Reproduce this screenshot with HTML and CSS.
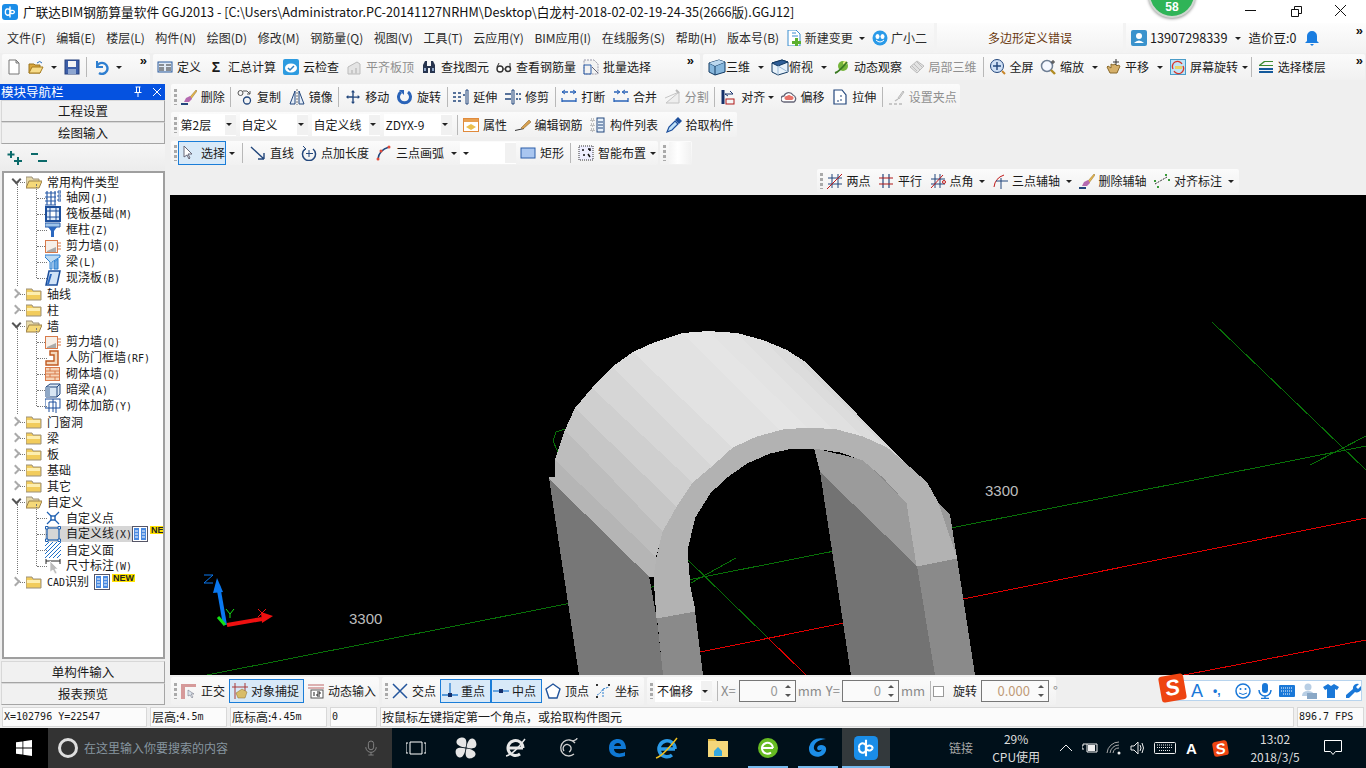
FILE: index.html
```html
<!DOCTYPE html>
<html lang="zh-CN">
<head>
<meta charset="utf-8">
<title>广联达BIM钢筋算量软件 GGJ2013</title>
<link rel="stylesheet" href="styles.css">
</head>
<body>
<svg class="defs" aria-hidden="true">
<defs>
<symbol id="new" viewBox="0 0 16 16"><path d="M3 1h7l3 3v11H3z" fill="#fff" stroke="#777"/><path d="M10 1v3h3z" fill="#ddd" stroke="#777"/></symbol>
<symbol id="open" viewBox="0 0 16 16"><path d="M1 5h5l1 1h5v8H1z" fill="#d9a63c" stroke="#9a7420"/><path d="M1 14l3-6h11l-3 6z" fill="#f7dc8a" stroke="#a67c20"/><path d="M9 4q3-3 5 0" stroke="#2a6ebb" fill="none"/></symbol>
<symbol id="save" viewBox="0 0 16 16"><rect x="1" y="1" width="14" height="14" fill="#3c5ea8" stroke="#26407c"/><rect x="4" y="2" width="8" height="6" fill="#f4f4f4"/><rect x="4" y="10" width="8" height="5" fill="#8ea6d0"/></symbol>
<symbol id="undo" viewBox="0 0 16 16"><path d="M4 2v6h6" fill="none" stroke="#2f7fd0" stroke-width="2"/><path d="M4 7a5.500 5.500 0 1 1 2 7" fill="none" stroke="#2f7fd0" stroke-width="2.400"/></symbol>
<symbol id="def" viewBox="0 0 16 16"><rect x="1" y="3" width="14" height="10" fill="#e0eaf6" stroke="#2b5a9b"/><path d="M2 6h5M2 9h5M2 11h5M9 6h5M9 9h5M9 11h5" stroke="#333"/></symbol>
<symbol id="cloud" viewBox="0 0 16 16"><rect width="16" height="16" rx="2" fill="#2d9be0"/><ellipse cx="8" cy="9" rx="6" ry="4.500" fill="#fff"/><path d="M5 9l2 2 4-4" fill="none" stroke="#2d7fc0" stroke-width="1.500"/></symbol>
<symbol id="pq" viewBox="0 0 16 16"><path d="M2 8l9-5 3 2v10H2z" fill="#e4e4e4" stroke="#bbb"/><path d="M5 11h2v4H5zM9 9h2v6H9z" fill="#c8c8c8"/></symbol>
<symbol id="find" viewBox="0 0 16 16"><path d="M2 6l2-4h2v5h4V2h2l2 4v8H9V9H7v5H2z" fill="#27344e"/><path d="M3 9h2v3H3zM11 9h2v3h-2z" fill="#8ea6c8"/></symbol>
<symbol id="see" viewBox="0 0 16 16"><circle cx="4" cy="10" r="3" fill="#fff" stroke="#333" stroke-width="1.400"/><path d="M7 10h3M14 4v6M1 8l2-4" stroke="#333" fill="none"/><circle cx="12" cy="10" r="2.500" fill="#fff" stroke="#333" stroke-width="1.400"/></symbol>
<symbol id="batch" viewBox="0 0 16 16"><path d="M1 1h10l4 4v10H1z" fill="#f2f2f2" stroke="#99a" stroke-dasharray="2 1"/><path d="M1 6h7v9H1z" fill="none" stroke="#2a5ca8"/><path d="M9 8l6 6" stroke="#667"/></symbol>
<symbol id="cube" viewBox="0 0 18 18"><path d="M1 5l10-3 6 2v10l-10 3-6-3z" fill="#86b6dc" stroke="#123a63"/><path d="M1 5l6 3 10-4M7 8v9" fill="none" stroke="#123a63"/><path d="M1 5l10-3 6 2-10 4z" fill="#bcd8ef"/></symbol>
<symbol id="top" viewBox="0 0 18 18"><path d="M1 5l10-3 6 2v10l-10 3-6-3z" fill="#e8f2fa" stroke="#123a63"/><path d="M1 5l10-3 6 2-10 4z" fill="#2f5f98" stroke="#123a63"/><path d="M7 8v9M7 8l10 6" stroke="#9bbad6" fill="none"/></symbol>
<symbol id="orbit" viewBox="0 0 16 16"><circle cx="9" cy="7" r="5" fill="#75b53a"/><circle cx="11" cy="4" r="2" fill="#eef08a"/><path d="M1 14Q5 13 13 3" stroke="#3a7a22" stroke-width="2" fill="none"/></symbol>
<symbol id="loc" viewBox="0 0 16 16"><path d="M1 8l7-6 7 5-7 7z" fill="#e2e2e2" stroke="#bdbdbd"/><path d="M5 5l6 6M8 3l5 5M3 7l5 5" stroke="#bdbdbd"/></symbol>
<symbol id="full" viewBox="0 0 16 16"><circle cx="7" cy="7" r="6.500" fill="#cfe0f5" stroke="#23477c"/><path d="M7 3v8M3 7h8" stroke="#23477c" stroke-width="1.400"/><path d="M12 12l3 3" stroke="#c8862a" stroke-width="2"/></symbol>
<symbol id="zm" viewBox="0 0 16 16"><circle cx="7" cy="7" r="5.500" fill="#f5f8ff" stroke="#6f7f95" stroke-width="1.500"/><path d="M11 11l4 4" stroke="#b08a20" stroke-width="2.400"/><path d="M13 1v4M11 3h4" stroke="#333"/></symbol>
<symbol id="pan" viewBox="0 0 16 16"><path d="M2 8l3 6h7l3-7-2-1-1 1-2-2-2 1-2-1v4L3 7z" fill="#d6b06a" stroke="#8a6a2c"/><path d="M11 0v6M8 3h6" stroke="#333"/></symbol>
<symbol id="rotsc" viewBox="0 0 16 16"><rect x=".5" y=".5" width="15" height="15" fill="#bfe4f7" stroke="#4a9cc8"/><path d="M3 10a5 5 0 0 1 9-5M13 7a5 5 0 0 1-9 5" fill="none" stroke="#d8362a" stroke-width="1.400"/><rect x="5" y="7" width="7" height="3" fill="#e7d56a"/></symbol>
<symbol id="floors" viewBox="0 0 16 16"><path d="M1 6l5-4h9v1H7L3 6h12v1H1z" fill="#3c8a30"/><path d="M1 10h14M1 13h14" stroke="#145a9c" stroke-width="2"/></symbol>
<symbol id="brush" viewBox="0 0 16 16"><path d="M9 8l6-7 1 1-6 8z" fill="#e9b84a" stroke="#8a6a2c" stroke-width=".500"/><path d="M5 9l4-2 2 3-3 3H3z" fill="#b56ab0"/><path d="M0 15h7" stroke="#23477c" stroke-width="2"/></symbol>
<symbol id="copy" viewBox="0 0 16 16"><circle cx="3.500" cy="4" r="2.500" fill="none" stroke="#555"/><circle cx="10" cy="11.500" r="3.500" fill="none" stroke="#23477c" stroke-width="1.300"/><path d="M6 2h4l3 3M13 2v3h-3" fill="none" stroke="#555"/></symbol>
<symbol id="mir" viewBox="0 0 16 16"><path d="M6 2v13H1zM10 2v13h5z" fill="#e6eef8" stroke="#23477c"/><path d="M8 0v16" stroke="#777" stroke-dasharray="2 1"/></symbol>
<symbol id="mv" viewBox="0 0 16 16"><path d="M8 1l2 2.500H8.700v4h4V6L15 8l-2.300 2V8.700h-4v4H10L8 15l-2-2.300h1.300v-4h-4V10L1 8l2.300-2v1.300h4v-4H6z" fill="#23477c"/></symbol>
<symbol id="rot" viewBox="0 0 16 16"><path d="M4 3a6 6 0 1 0 7 0" fill="none" stroke="#2a63b8" stroke-width="3"/><path d="M2 1h5v5z" fill="#2a63b8"/></symbol>
<symbol id="ext" viewBox="0 0 16 16"><path d="M13 1h2v14h-2z" fill="none" stroke="#23477c"/><path d="M0 4h3M5 4h3M0 8h3M5 8h3M10 6h2M0 12h3M5 12h3" stroke="#23477c" stroke-width="1.300"/></symbol>
<symbol id="trim" viewBox="0 0 16 16"><path d="M7 1h2v14H7z" fill="none" stroke="#23477c"/><path d="M0 5h6M0 10h6M11 5h2M11 10h2M14 5h2M14 10h2" stroke="#23477c" stroke-width="1.300"/></symbol>
<symbol id="brk" viewBox="0 0 16 16"><path d="M1 3h6M9 3h6M1 12h14M1 9v4M15 9v4" stroke="#2a63b8" fill="none" stroke-width="1.300"/><path d="M4 1L1 3l3 2M12 1l3 2-3 2" stroke="#2a63b8" fill="none"/></symbol>
<symbol id="mrg" viewBox="0 0 16 16"><path d="M1 12h14M1 9v4M15 9v4M1 3h5M10 3h5" stroke="#2a63b8" fill="none" stroke-width="1.300"/><path d="M4 1l3 2-3 2M12 1L9 3l3 2" stroke="#2a63b8" fill="none"/></symbol>
<symbol id="spl" viewBox="0 0 16 16"><path d="M1 14L14 3v11zM0 9l14-6" fill="#eee" stroke="#c4c4c4"/><path d="M11 1l3 3" stroke="#bbb" stroke-width="2"/></symbol>
<symbol id="alg" viewBox="0 0 16 16"><path d="M2 1v14" stroke="#16306a" stroke-width="3"/><path d="M4 5h8l-3-3M4 5l3 2" fill="none" stroke="#16306a"/><rect x="5" y="10" width="8" height="5" fill="none" stroke="#b01818"/></symbol>
<symbol id="off" viewBox="0 0 16 16"><path d="M3 13a3 3 0 0 1 0-6 5 5 0 0 1 9-1 4 4 0 0 1 1 7z" fill="#fff" stroke="#667" stroke-width="1.300"/><path d="M5 11a2 2 0 0 1 1-4 2.500 2.500 0 0 1 4 0 2 2 0 0 1 1 4z" fill="#e8736a"/></symbol>
<symbol id="str" viewBox="0 0 16 16"><path d="M2 1h8l4 5v9H2z" fill="#fff" stroke="#23477c" stroke-width="1.200"/><path d="M9 6v2M9 10v2M5 12h2" stroke="#23477c"/></symbol>
<symbol id="grp" viewBox="0 0 16 16"><path d="M9 9l5-7 1 1-5 7z" fill="#ddd" stroke="#bbb"/><path d="M0 15h3M5 15h3M10 15h3M6 12l3-2" stroke="#bbb" stroke-width="1.400"/></symbol>
<symbol id="attr" viewBox="0 0 16 16"><rect x=".5" y="1.500" width="15" height="13" fill="#fff" stroke="#e08a3c"/><path d="M1 2h14v3H1z" fill="#e8a050"/><path d="M3 10l5-3 5 3-5 3z" fill="#eac04e"/></symbol>
<symbol id="bar" viewBox="0 0 16 16"><path d="M0 13l9-2v1l-9 2z" fill="#333"/><path d="M6 11l8-8 2 2-8 7z" fill="#d8a050" stroke="#7a5a24" stroke-width=".500"/></symbol>
<symbol id="lst" viewBox="0 0 16 16"><path d="M1 2h3v2H1zM1 7h3v2H1zM1 12h3v2H1z" fill="none" stroke="#888" stroke-dasharray="1 1"/><rect x="7" y="1" width="7" height="14" fill="#e6f0fa" stroke="#23477c"/><path d="M8 5h5M8 8h5M8 11h5" stroke="#23477c"/></symbol>
<symbol id="pick" viewBox="0 0 16 16"><path d="M1 15l2-5 6-6 3 3-6 6z" fill="#bfe0f7" stroke="#1d4f9c" stroke-width="1.200"/><path d="M9 3l3-3 4 4-3 3z" fill="#1d4f9c"/></symbol>
<symbol id="cur" viewBox="0 0 16 16"><path d="M4 1v11l3-2 2 4 1-1-2-4h4z" fill="#fff" stroke="#667"/></symbol>
<symbol id="ln" viewBox="0 0 16 16"><path d="M1 2l13 12M14 14v-6M14 14H8" fill="none" stroke="#23477c" stroke-width="1.400"/></symbol>
<symbol id="ptl" viewBox="0 0 16 16"><path d="M4 4a6.500 6.500 0 1 0 8 0" fill="none" stroke="#23477c" stroke-width="1.500"/><path d="M2 1l3 3-3 2" fill="none" stroke="#23477c"/><path d="M8 5v7M5 8.500h7" stroke="#23477c"/></symbol>
<symbol id="arc" viewBox="0 0 16 16"><path d="M2 14Q3 5 13 2" fill="none" stroke="#23477c" stroke-width="1.500"/><circle cx="2" cy="14" r="1.500" fill="#e24b3a"/><circle cx="5" cy="6" r="1.500" fill="#e24b3a"/><circle cx="13" cy="2" r="1.500" fill="#e24b3a"/></symbol>
<symbol id="rc" viewBox="0 0 16 16"><rect x="1" y="3" width="14" height="10" fill="#a9c6f0" stroke="#2a5ca8"/></symbol>
<symbol id="sm" viewBox="0 0 16 16"><rect x="1" y="1" width="14" height="14" fill="#eef" stroke="#333" stroke-dasharray="1 1"/><path d="M4 5h2M10 4h2v2M5 10h2M10 9l2 3" stroke="#111" stroke-width="1.500"/></symbol>
<symbol id="two" viewBox="0 0 16 16"><path d="M5 1v14M11 1v14M1 5h14M1 11h14" stroke="#23477c"/><path d="M0 16L15 1" stroke="#c01818"/></symbol>
<symbol id="par" viewBox="0 0 16 16"><path d="M5 1v14M11 1v14" stroke="#23477c" stroke-width="1.200"/><path d="M1 5h14M1 11h14" stroke="#b01818" stroke-width="1.200"/></symbol>
<symbol id="ang" viewBox="0 0 16 16"><path d="M5 1v14M10 1v14M1 6h14M1 11h14" stroke="#23477c"/><path d="M1 15L13 2" stroke="#c01818"/><circle cx="14" cy="9" r="1.500" fill="none" stroke="#c01818"/></symbol>
<symbol id="arx" viewBox="0 0 16 16"><path d="M2 14Q3 5 12 2" fill="none" stroke="#c01818"/><path d="M9 5v11M4 8h12" stroke="#23477c"/></symbol>
<symbol id="dim" viewBox="0 0 16 16"><path d="M1 11L13 4" stroke="#333" stroke-dasharray="2 1"/><path d="M0 7h2v2H0zM3 13h2v2H3zM11 1h2v2h-2zM14 6h2v2h-2z" fill="#3a9a3a"/></symbol>
<symbol id="ort" viewBox="0 0 16 16"><path d="M0 1h15v3H4v12H0z" fill="#d69a9a"/><path d="M7 7v6l2-1 2 3 1-1-2-3h3z" fill="#dde6ee" stroke="#667" stroke-width=".500"/></symbol>
<symbol id="snp" viewBox="0 0 16 16"><path d="M3 0v16M13 0v8M0 4h16" stroke="#a83838"/><path d="M4 10l6-4 5 3-2 6H6z" fill="#d8bc68" stroke="#8a6a2c" stroke-width=".500"/></symbol>
<symbol id="dyn" viewBox="0 0 16 16"><path d="M0 2h16M0 5h16" stroke="#c06868" stroke-width="1.200"/><rect x="3" y="7" width="12" height="8" fill="#fff" stroke="#555"/><path d="M6 9v4M9 9h3v2H9v2h3" stroke="#222" fill="none"/></symbol>
<symbol id="crs" viewBox="0 0 16 16"><path d="M1 1l14 14M15 1L1 15" stroke="#23559c" stroke-width="1.500"/></symbol>
<symbol id="prp" viewBox="0 0 16 16"><path d="M0 12h16M8 0v12" stroke="#2a7fd0" stroke-width="1.300"/><path d="M6 10h4v4H6z" fill="#16306a"/></symbol>
<symbol id="mdp" viewBox="0 0 16 16"><path d="M0 8h16" stroke="#2a7fd0" stroke-width="1.300"/><path d="M6 6h4v4H6z" fill="#16306a"/></symbol>
<symbol id="vtx" viewBox="0 0 16 16"><path d="M8 1l7 5-3 9H4L1 6z" fill="#fff" stroke="#23559c" stroke-width="1.400"/></symbol>
<symbol id="crd" viewBox="0 0 16 16"><path d="M2 12Q5 11 8 6M8 6l6-2M8 6v8" stroke="#2a7fd0" fill="none" stroke-dasharray="2 1"/><path d="M1 1l2 2M3 1L1 3M13 1l2 2M15 1l-2 2M1 13l2 2M3 13l-2 2" stroke="#333"/></symbol>
<symbol id="fc" viewBox="0 0 16 16"><path d="M0 3h6l1 2h8v9H0z" fill="#f2cc5c" stroke="#9c9078"/><path d="M1 6h13v3H1z" fill="#fdeeb0"/></symbol>
<symbol id="fo" viewBox="0 0 16 16"><path d="M0 3h6l1 2h6v8H0z" fill="#e6d9a8" stroke="#9c9078"/><path d="M0 14l3-7h13l-3 7z" fill="#f5d878" stroke="#9c8048"/></symbol>
<symbol id="t-grid" viewBox="0 0 16 16"><path d="M0 3h11M0 7h11M0 11h11M0 15h11M2 1v14M6 1v14M10 1v14" stroke="#2a5ca8" stroke-width="1.200"/><path d="M13 1h3v2h-3zM13 5h3v2h-3zM13 9h3v2h-3z" fill="none" stroke="#2a5ca8"/></symbol>
<symbol id="t-raft" viewBox="0 0 16 16"><rect x="1" y="1" width="14" height="14" fill="#dde9f7" stroke="#1d4f9c" stroke-width="2"/><rect x="5" y="5" width="6" height="6" fill="#fff" stroke="#1d4f9c"/><path d="M1 5h4M11 5h4M1 11h4M11 11h4M5 1v4M11 1v4M5 11v4M11 11v4" stroke="#1d4f9c"/></symbol>
<symbol id="t-col" viewBox="0 0 16 16"><path d="M0 1h15v4H0z" fill="#9ec4ea" stroke="#2a5ca8"/><path d="M3 5h9L9 9v6H6V9z" fill="#2a68c0"/></symbol>
<symbol id="t-shear" viewBox="0 0 16 16"><rect x=".5" y="2.500" width="12" height="12" fill="#f6efe8" stroke="#d87a4a"/><path d="M2 13l9-4v5H2z" fill="#aaa"/><path d="M13 5h3M13 8h3M13 11h3" stroke="#d87a4a"/></symbol>
<symbol id="t-beam" viewBox="0 0 16 16"><path d="M0 3l5 5v7h2V8l8-5V1H0z" fill="#bddaf2" stroke="#2a7fd0"/><path d="M9 8l4-3v10h-4z" fill="#6aa8e0" stroke="#2a7fd0"/></symbol>
<symbol id="t-slab" viewBox="0 0 16 16"><path d="M4 1h11l-3 14H1z" fill="#cfe2f7" stroke="#1d4f9c" stroke-width="1.500"/><path d="M2 14L5 4h2L4 14z" fill="#2a68c0"/></symbol>
<symbol id="t-rf" viewBox="0 0 16 16"><path d="M5 1h8v14H1v-4h8V5H5z" fill="#f4d8bc" stroke="#c05a20" stroke-width="1.400"/></symbol>
<symbol id="t-brk" viewBox="0 0 16 16"><rect x=".5" y="1.500" width="14" height="13" fill="#f6d4b8" stroke="#d87a4a"/><path d="M1 5h13M1 8h13M1 11h13M5 2v3M10 5v3M5 8v3M10 11v3" stroke="#d87a4a"/></symbol>
<symbol id="t-hid" viewBox="0 0 16 16"><path d="M1 5l4-3h10v10l-3 3H1z" fill="#d8e6f4" stroke="#23477c"/><path d="M1 5h11v10M12 5l3-3" fill="none" stroke="#23477c"/><path d="M1 5h4v10H1z" fill="#8fa8c6"/></symbol>
<symbol id="t-rein" viewBox="0 0 16 16"><rect x="0" y="1" width="15" height="9" fill="none" stroke="#1d4f9c"/><path d="M4 4h7v11M8 1v13M4 4v10" stroke="#1d4f9c" fill="none"/></symbol>
<symbol id="t-pt" viewBox="0 0 16 16"><path d="M2 2l12 12M14 2L2 14" stroke="#1d5fb0" stroke-width="1.200"/><rect x="6" y="6" width="4" height="4" fill="#fff" stroke="#1d5fb0" stroke-width="1.400"/></symbol>
<symbol id="t-ln" viewBox="0 0 16 16"><rect x="2" y="2" width="12" height="12" fill="none" stroke="#1d5fb0" stroke-width="1.200"/><path d="M.5.500h2.500v2.500H.5zM13 .5h2.500v2.500H13zM.5 13h2.500v2.500H.5zM13 13h2.500v2.500H13z" fill="#fff" stroke="#1d5fb0"/></symbol>
<symbol id="t-ha" viewBox="0 0 16 16"><path d="M0 4L4 0M0 8L8 0M0 12L12 0M0 16L16 0M4 16L16 4M8 16l8-8M12 16l4-4" stroke="#1d6fc8"/></symbol>
<symbol id="t-dim" viewBox="0 0 16 16"><path d="M1 1v5M15 1v5M1 3h14" stroke="#222"/><path d="M5 3v11l3-2 2 4 2-1-2-4h3z" fill="#bbb" stroke="#fff" stroke-width=".700"/></symbol>
<symbol id="book" viewBox="0 0 16 16"><rect x=".5" y=".5" width="15" height="15" fill="#fff" stroke="#556"/><path d="M2 2h5v12H2zM9 2h5v12H9z" fill="#4a8ae0"/><path d="M3 5h3M3 8h3M3 11h3M10 5h3M10 8h3M10 11h3" stroke="#fff"/></symbol>
<symbol id="logo" viewBox="0 0 16 16"><rect width="16" height="16" rx="3" fill="#1a8de8"/><path d="M8 2.500v11M3.500 8a2 2 0 0 1 4.500-1.500M12.500 8A2 2 0 0 1 8 6.500M3.500 8a2 2 0 0 0 4.500 1.500M12.500 8A2 2 0 0 0 8 9.500" fill="none" stroke="#fff" stroke-width="1.400"/></symbol>
<symbol id="nb" viewBox="0 0 16 16"><path d="M2 0h8l4 4v12H2z" fill="#fff" stroke="#3a8ed0"/><path d="M6 3h4M6 6h6" stroke="#3a8ed0"/><path d="M9 8h3v3h3v3h-3v2H9v-2H6v-3h3z" fill="#5cb030"/></symbol>
<symbol id="gx" viewBox="0 0 16 16"><circle cx="8" cy="8" r="7.500" fill="#2a9ae8"/><ellipse cx="5.500" cy="6.500" rx="2" ry="2.500" fill="#fff"/><ellipse cx="10.500" cy="6.500" rx="2" ry="2.500" fill="#fff"/><path d="M4 10q4 4 8 0" fill="none" stroke="#fff"/></symbol>
<symbol id="usr" viewBox="0 0 16 16"><rect width="16" height="16" rx="2" fill="#3a92cc"/><circle cx="8" cy="6" r="3" fill="#fff"/><path d="M3 13q5-5 10 0z" fill="#fff"/></symbol>
<symbol id="bell" viewBox="0 0 16 16"><path d="M8 1a5 5 0 0 1 5 5v5l2 2H1l2-2V6a5 5 0 0 1 5-5zM6 14h4l-2 2z" fill="#1a7de0"/></symbol>
</defs>
</svg>

<div class="app">
  <header class="title">
    <svg class="ic16"><use href="#logo"/></svg>
    <span class="title-text">广联达BIM钢筋算量软件 GGJ2013 - [C:\Users\Administrator.PC-20141127NRHM\Desktop\白龙村-2018-02-02-19-24-35(2666版).GGJ12]</span>
    <div class="badge"><span>58</span></div>
    <div class="winbtns">
      <svg class="wb" viewBox="0 0 16 16"><path d="M3 6.500h11" stroke="#111"/></svg>
      <svg class="wb" viewBox="0 0 16 16"><path d="M3.500 5.500h7v7h-7zM6.500 5.500v-3h7v7h-3" fill="none" stroke="#111"/></svg>
      <svg class="wb" viewBox="0 0 16 16"><path d="M2 1l11 11M13 1L2 12" stroke="#111"/></svg>
    </div>
  </header>

  <nav class="menu">
    <div class="menu-main">
      <span>文件(F)</span><span>编辑(E)</span><span>楼层(L)</span><span>构件(N)</span><span>绘图(D)</span><span>修改(M)</span><span>钢筋量(Q)</span><span>视图(V)</span><span>工具(T)</span><span>云应用(Y)</span><span>BIM应用(I)</span><span>在线服务(S)</span><span>帮助(H)</span><span>版本号(B)</span>
      <span class="it nbx"><svg class="ic16"><use href="#nb"/></svg>新建变更</span><i class="dd"></i>
      <span class="it gx"><svg class="ic16"><use href="#gx"/></svg>广小二</span>
    </div>
    <div class="msg">多边形定义错误</div>
    <div class="acct">
      <svg class="ic16"><use href="#usr"/></svg><span class="phone">13907298339</span><i class="dd"></i><span class="bean">造价豆:0</span><svg class="ic16 bellic"><use href="#bell"/></svg><span class="more more-r">»</span>
    </div>
  </nav>

  <div class="row1">
    <div class="tb tb-a">
      <svg class="ic16"><use href="#new"/></svg>
      <svg class="ic16"><use href="#open"/></svg><i class="dd"></i>
      <svg class="ic16"><use href="#save"/></svg>
      <b class="sep"></b>
      <svg class="ic16"><use href="#undo"/></svg><i class="dd"></i>
      <span class="more">»</span>
    </div>
    <div class="tb tb-b">
      <span class="it"><svg class="ic16"><use href="#def"/></svg>定义</span>
      <span class="it"><span class="sigma">Σ</span>汇总计算</span>
      <span class="it"><svg class="ic16"><use href="#cloud"/></svg>云检查</span>
      <span class="it off"><svg class="ic16"><use href="#pq"/></svg>平齐板顶</span>
      <span class="it"><svg class="ic16"><use href="#find"/></svg>查找图元</span>
      <span class="it"><svg class="ic16"><use href="#see"/></svg>查看钢筋量</span>
      <span class="it"><svg class="ic16"><use href="#batch"/></svg>批量选择</span>
      <span class="more">»</span>
    </div>
    <div class="tb tb-c">
      <span class="it tight"><svg class="ic18"><use href="#cube"/></svg>三维</span><i class="dd"></i>
      <span class="it tight"><svg class="ic18"><use href="#top"/></svg>俯视</span><i class="dd"></i>
      <span class="it"><svg class="ic16"><use href="#orbit"/></svg>动态观察</span>
      <span class="it off"><svg class="ic16"><use href="#loc"/></svg>局部三维</span>
      <b class="sep sep-a"></b>
      <span class="it"><svg class="ic16"><use href="#full"/></svg>全屏</span>
      <span class="it"><svg class="ic16"><use href="#zm"/></svg>缩放</span><i class="dd"></i>
      <span class="it"><svg class="ic16"><use href="#pan"/></svg>平移</span><i class="dd"></i>
      <span class="it"><svg class="ic16"><use href="#rotsc"/></svg>屏幕旋转</span><i class="dd dd-n"></i>
      <b class="sep sep-b"></b>
      <span class="it"><svg class="ic16"><use href="#floors"/></svg>选择楼层</span>
      <span class="more">»</span>
    </div>
  </div>

  <div class="main">
    <aside class="nav">
      <div class="nav-head"><span>模块导航栏</span>
        <svg class="hd-ic pin" viewBox="0 0 12 12"><path d="M3.500 1h5M4.500 1v5M7.500 1v5M2.500 6.500h7M6 7v4" fill="none" stroke="#fff"/></svg>
        <svg class="hd-ic" viewBox="0 0 12 12"><path d="M2 2l8 8M10 2l-8 8" stroke="#fff"/></svg>
      </div>
      <div class="nav-btn">工程设置</div>
      <div class="nav-btn">绘图输入</div>
      <div class="nav-tools">
        <svg class="pm" viewBox="0 0 16 16"><path d="M4 1v7M0.500 4.500h7M11 7v8M7 11h8" stroke="#0b6a6a" stroke-width="2"/></svg>
        <svg class="pm" viewBox="0 0 16 16"><path d="M0 4h7M7 11h9" stroke="#0b6a6a" stroke-width="2"/></svg>
      </div>
      <div class="tree">
        <div class="r"><i class="chev open"></i><svg class="ic16"><use href="#fo"/></svg><span>常用构件类型</span></div>
        <div class="kids">
          <div class="c"><svg class="ic16"><use href="#t-grid"/></svg><span>轴网<em>(J)</em></span></div>
          <div class="c"><svg class="ic16"><use href="#t-raft"/></svg><span>筏板基础<em>(M)</em></span></div>
          <div class="c"><svg class="ic16"><use href="#t-col"/></svg><span>框柱<em>(Z)</em></span></div>
          <div class="c"><svg class="ic16"><use href="#t-shear"/></svg><span>剪力墙<em>(Q)</em></span></div>
          <div class="c"><svg class="ic16"><use href="#t-beam"/></svg><span>梁<em>(L)</em></span></div>
          <div class="c"><svg class="ic16"><use href="#t-slab"/></svg><span>现浇板<em>(B)</em></span></div>
        </div>
        <div class="r"><i class="chev"></i><svg class="ic16"><use href="#fc"/></svg><span>轴线</span></div>
        <div class="r"><i class="chev"></i><svg class="ic16"><use href="#fc"/></svg><span>柱</span></div>
        <div class="r"><i class="chev open"></i><svg class="ic16"><use href="#fo"/></svg><span>墙</span></div>
        <div class="kids">
          <div class="c"><svg class="ic16"><use href="#t-shear"/></svg><span>剪力墙<em>(Q)</em></span></div>
          <div class="c"><svg class="ic16"><use href="#t-rf"/></svg><span>人防门框墙<em>(RF)</em></span></div>
          <div class="c"><svg class="ic16"><use href="#t-brk"/></svg><span>砌体墙<em>(Q)</em></span></div>
          <div class="c"><svg class="ic16"><use href="#t-hid"/></svg><span>暗梁<em>(A)</em></span></div>
          <div class="c"><svg class="ic16"><use href="#t-rein"/></svg><span>砌体加筋<em>(Y)</em></span></div>
        </div>
        <div class="r"><i class="chev"></i><svg class="ic16"><use href="#fc"/></svg><span>门窗洞</span></div>
        <div class="r"><i class="chev"></i><svg class="ic16"><use href="#fc"/></svg><span>梁</span></div>
        <div class="r"><i class="chev"></i><svg class="ic16"><use href="#fc"/></svg><span>板</span></div>
        <div class="r"><i class="chev"></i><svg class="ic16"><use href="#fc"/></svg><span>基础</span></div>
        <div class="r"><i class="chev"></i><svg class="ic16"><use href="#fc"/></svg><span>其它</span></div>
        <div class="r"><i class="chev open"></i><svg class="ic16"><use href="#fo"/></svg><span>自定义</span></div>
        <div class="kids">
          <div class="c"><svg class="ic16"><use href="#t-pt"/></svg><span>自定义点</span></div>
          <div class="c"><div class="hl"><svg class="ic16"><use href="#t-ln"/></svg><span>自定义线<em>(X)</em></span></div><svg class="ic16 bk"><use href="#book"/></svg><span class="new">NE</span></div>
          <div class="c"><svg class="ic16"><use href="#t-ha"/></svg><span>自定义面</span></div>
          <div class="c"><svg class="ic16"><use href="#t-dim"/></svg><span>尺寸标注<em>(W)</em></span></div>
        </div>
        <div class="r"><i class="chev"></i><svg class="ic16"><use href="#fc"/></svg><span><em>CAD</em>识别</span><svg class="ic16 bk"><use href="#book"/></svg><span class="new">NEW</span></div>
      </div>
      <div class="nav-btn nb-b">单构件输入</div>
      <div class="nav-btn">报表预览</div>
    </aside>

    <section class="work">
      <div class="tb t2">
        <i class="grip"></i>
        <span class="it"><svg class="ic16"><use href="#brush"/></svg>删除</span><b class="sep"></b>
        <span class="it"><svg class="ic16"><use href="#copy"/></svg>复制</span>
        <span class="it"><svg class="ic16"><use href="#mir"/></svg>镜像</span><b class="sep"></b>
        <span class="it"><svg class="ic16"><use href="#mv"/></svg>移动</span>
        <span class="it"><svg class="ic16"><use href="#rot"/></svg>旋转</span><b class="sep"></b>
        <span class="it"><svg class="ic16"><use href="#ext"/></svg>延伸</span>
        <span class="it"><svg class="ic16"><use href="#trim"/></svg>修剪</span><b class="sep"></b>
        <span class="it"><svg class="ic16"><use href="#brk"/></svg>打断</span>
        <span class="it"><svg class="ic16"><use href="#mrg"/></svg>合并</span>
        <span class="it off"><svg class="ic16"><use href="#spl"/></svg>分割</span><b class="sep"></b>
        <span class="it"><svg class="ic16"><use href="#alg"/></svg>对齐</span><i class="dd dd-n"></i>
        <span class="it"><svg class="ic16"><use href="#off"/></svg>偏移</span>
        <span class="it"><svg class="ic16"><use href="#str"/></svg>拉伸</span><b class="sep"></b>
        <span class="it off"><svg class="ic16"><use href="#grp"/></svg>设置夹点</span>
      </div>

      <div class="tb t3">
        <i class="grip"></i>
        <div class="combo"><span>第2层</span><i class="dd"></i></div>
        <div class="combo c68"><span>自定义</span><i class="dd"></i></div>
        <div class="combo c68"><span>自定义线</span><i class="dd"></i></div>
        <div class="combo c68"><span>ZDYX-9</span><i class="dd"></i></div>
        <b class="sep"></b>
        <span class="it"><svg class="ic16"><use href="#attr"/></svg>属性</span>
        <span class="it"><svg class="ic16"><use href="#bar"/></svg>编辑钢筋</span>
        <span class="it"><svg class="ic16"><use href="#lst"/></svg>构件列表</span>
        <span class="it"><svg class="ic16"><use href="#pick"/></svg>拾取构件</span>
      </div>

      <div class="t4wrap">
        <div class="tb t4">
          <i class="grip"></i>
          <span class="it act sel"><svg class="ic16"><use href="#cur"/></svg>选择</span><i class="dd"></i><b class="sep"></b>
          <span class="it"><svg class="ic16"><use href="#ln"/></svg>直线</span>
          <span class="it"><svg class="ic16"><use href="#ptl"/></svg>点加长度</span>
          <span class="it"><svg class="ic16"><use href="#arc"/></svg>三点画弧</span><i class="dd dd-l"></i>
          <div class="combo blank"><i class="dd"></i></div>
          <span class="it rcx"><svg class="ic16"><use href="#rc"/></svg>矩形</span><b class="sep"></b>
          <span class="it"><svg class="ic16"><use href="#sm"/></svg>智能布置</span><i class="dd dd-n"></i>
        </div>
        <div class="tb t4b"><i class="grip"></i><div class="fade"></div></div>
      </div>

      <div class="tb t5">
        <i class="grip"></i>
        <span class="it"><svg class="ic16"><use href="#two"/></svg>两点</span>
        <span class="it"><svg class="ic16"><use href="#par"/></svg>平行</span>
        <span class="it"><svg class="ic16"><use href="#ang"/></svg>点角</span><i class="dd"></i>
        <span class="it"><svg class="ic16"><use href="#arx"/></svg>三点辅轴</span><i class="dd"></i>
        <span class="it"><svg class="ic16"><use href="#brush"/></svg>删除辅轴</span>
        <span class="it"><svg class="ic16"><use href="#dim"/></svg>对齐标注</span><i class="dd"></i>
      </div>

      <svg class="scene" viewBox="170 195 1196 480">
        <rect x="170" y="195" width="1196" height="480" fill="#000"/>
        <g fill="none" stroke="#087008">
          <path d="M207 675L1366 446"/>
          <path d="M1212 322L1366 470M1310 465L1366 436"/>
          <path d="M687 559L767 637M691 583L736 558"/>
          <path d="M565 429L556 432L553 441L558 452"/>
        </g>
        <g fill="none" stroke="#e00000">
          <path d="M700 652L1366 518M1184 675L1366 640M767 637L806 675"/>
        </g>
        <path d="M549 478L649 576L657 620L663 675L579 675z" fill="#777"/>
        <path d="M657 618L695 611L703 675L663 675z" fill="#8a8a8a"/>
        <path d="M814 448L863 460L907 503L917 566L820 472z" fill="#9b9b9b"/>
        <path d="M863 460L883 470L907 503z" fill="#8a8a8a"/>
        <path d="M820 472L917 566L920 568L935 675L851 675z" fill="#737373"/>
        <path d="M917 566L957 558L975 675L935 675z" fill="#8a8a8a"/>
        <path d="M938 503L950 515L957 558L948 533z" fill="#9a9a9a"/>
        <path d="M549 478L555 477L555 460L656 557L654 577L649 576z" fill="#b5b5b5" stroke="#b5b5b5"/>
        <path d="M555 460L565 430L663 532L656 557z" fill="#bdbdbd"/>
        <path d="M565 430L575 408L677 507L663 532z" fill="#c6c6c6"/>
        <path d="M575 408L592 388L693 483L677 507z" fill="#cfcfcf"/>
        <path d="M592 388L612 367L712 467L693 483z" fill="#d6d6d6"/>
        <path d="M612 367L633 352L733 448L712 467z" fill="#dcdcdc"/>
        <path d="M633 352L655 342L682 333L782 432L733 448z" fill="#e2e2e2"/>
        <path d="M682 333L708 331L808 428L782 432z" fill="#e5e5e5"/>
        <path d="M708 331L737 333L833 430L808 428z" fill="#e3e3e3"/>
        <path d="M737 333L763 340L863 437L833 430z" fill="#e0e0e0"/>
        <path d="M763 340L787 350L887 448L863 437z" fill="#dcdcdc"/>
        <path d="M787 350L807 363L907 465L887 448z" fill="#d8d8d8"/>
        <path d="M807 363L950 515L938 503L927 483L907 465z" fill="#d4d4d4"/>
        <path d="M654 577L657 557L663 532L677 507L693 483L712 467L733 448L757 437L783 430L810 428L837 430L863 437L887 448L907 465L927 483L938 503L948 533L957 558L917 566L907 503L883 477L863 460L840 452L813 448L793 448L770 453L747 463L727 477L710 493L695 517L687 550L690 587L695 611L657 618z" fill="#b2b2b2" stroke="#b2b2b2"/>
        <text class="dimt" x="985" y="496">3300</text>
        <text class="dimt" x="349" y="624">3300</text>
        <g class="axes">
          <path d="M225 625L218 585" stroke="#0a78f0" stroke-width="4"/>
          <path d="M217 578L223 592L213 593z" fill="#0a78f0"/>
          <path d="M227 625L262 619" stroke="#f01010" stroke-width="4"/>
          <path d="M273 616L261 612L262 623z" fill="#f01010"/>
          <path d="M225 625L218 617" stroke="#14e014" stroke-width="3"/>
          <path d="M204 575h9l-9 8h9" fill="none" stroke="#0a78f0"/>
          <path d="M226 609l4 5 4-5M230 614v4" fill="none" stroke="#14e014"/>
          <path d="M258 609l8 8M266 609l-8 8" fill="none" stroke="#f01010"/>
        </g>
      </svg>

      <div class="bottom">
        <div class="tb b1">
          <i class="grip"></i>
          <span class="it"><svg class="ic16"><use href="#ort"/></svg>正交</span>
          <span class="it act snap"><svg class="ic16"><use href="#snp"/></svg>对象捕捉</span>
          <span class="it"><svg class="ic16"><use href="#dyn"/></svg>动态输入</span>
        </div>
        <div class="tb b2">
          <i class="grip"></i>
          <span class="it"><svg class="ic16"><use href="#crs"/></svg>交点</span>
          <div class="pair"><span class="it act w51"><svg class="ic16"><use href="#prp"/></svg>重点</span><span class="it act w51"><svg class="ic16"><use href="#mdp"/></svg>中点</span></div>
          <span class="it"><svg class="ic16"><use href="#vtx"/></svg>顶点</span>
          <span class="it"><svg class="ic16"><use href="#crd"/></svg>坐标</span>
        </div>
        <div class="tb b3">
          <i class="grip"></i>
          <div class="combo"><span>不偏移</span><i class="dd"></i></div>
          <b class="sep"></b>
          <span class="lab xlab">X=</span><div class="spin"><span>0</span><u class="sp"></u></div>
          <span class="lab">mm</span><span class="lab ylab">Y=</span><div class="spin"><span>0</span><u class="sp"></u></div>
          <span class="lab">mm</span>
          <b class="sep"></b>
          <i class="check"></i><span class="rotl">旋转</span>
          <div class="spin rotv"><span>0.000</span><u class="sp"></u></div>
          <span class="lab deg">°</span>
        </div>
      </div>
    </section>
  </div>

  <footer class="status">
    <div class="p p1"><em>X=102796 Y=22547</em></div>
    <div class="p p2">层高:<em>4.5m</em></div>
    <div class="p p3">底标高:<em>4.45m</em></div>
    <div class="p p4"><em>0</em></div>
    <div class="p p5">按鼠标左键指定第一个角点，或拾取构件图元</div>
    <div class="p p6"><em>896.7 FPS</em></div>
  </footer>

  <div class="taskbar">
    <div class="start"><svg class="win" viewBox="0 0 16 16"><path d="M0 2.300l6.500-.9v6.200H0zM7.300 1.300L16 0v7.600H7.300zM0 8.400h6.500v6.200L0 13.700zM7.300 8.400H16V16l-8.700-1.200z" fill="#fff"/></svg></div>
    <div class="search"><i class="cortana"></i><span>在这里输入你要搜索的内容</span>
      <svg class="mic" viewBox="0 0 16 16"><rect x="5" y="0" width="6" height="10" rx="3" fill="none" stroke="#8a8a8a"/><path d="M2 7a6 6 0 0 0 12 0M8 13v3M5 16h6" fill="none" stroke="#8a8a8a"/></svg></div>
    <div class="apps">
      <span class="tk tk-v"><svg viewBox="0 0 20 14" class="tv"><path d="M4 1h12v12H4zM2 2H0v10h2M18 2h2v10h-2" fill="none" stroke="#fff"/></svg></span>
      <span class="tk"><svg viewBox="0 0 22 22" class="ti"><g fill="#e6e6e6"><path id="lobe" d="M10.500 10.500C6 10 1 8 1.500 4.500 2 1 8-.5 10 1.500c2 2 1.500 6 .5 9z"/><path d="M11.500 10.500C12 6 14 1 17.500 1.500 21 2 22.500 8 20.500 10c-2 2-6 1.500-9 .5z"/><path d="M11.500 11.500c4.500.5 9.500 2.500 9 6-.5 3.500-6.500 5-8.500 3-2-2-1.500-6-.5-9z"/><path d="M10.500 11.500C10 16 8 21 4.500 20.500 1 20-.5 14 1.500 12c2-2 6-1.500 9-.5z"/></g></svg></span>
      <span class="tk"><svg viewBox="0 0 22 22" class="ti"><path d="M4 11h14M18 11A7.500 7.500 0 1 0 15 17" fill="none" stroke="#e8e8e8" stroke-width="3"/><path d="M1 19Q8 18 20 2" fill="none" stroke="#e8e8e8" stroke-width="1.500"/></svg></span>
      <span class="tk"><svg viewBox="0 0 22 22" class="ti"><path d="M19 6A8 8 0 1 0 18 17M8 14a4 4 0 1 1 5 1M16 4Q21 3 21 1" fill="none" stroke="#d0d0d0" stroke-width="1.300"/></svg></span>
      <span class="tk"><svg viewBox="0 0 22 22" class="ti"><path d="M3 11C3 4 8 2 12 2c5 0 8 4 8 10H8c0 4 5 6 11 3v4c-8 3-16 0-16-8z" fill="#0f78d4"/><path d="M8 9h7c0-4-6-4-7 0z" fill="#00101a"/></svg></span>
      <span class="tk"><svg viewBox="0 0 24 24" class="ti24"><path d="M5 13h15M20 13A8 8 0 1 0 17 19" fill="none" stroke="#2b9be8" stroke-width="3.500"/><path d="M1 22Q8 20 22 2" fill="none" stroke="#eec020" stroke-width="1.500"/></svg></span>
      <span class="tk"><svg viewBox="0 0 22 22" class="ti"><path d="M1 2h7l2 2h11v16H1z" fill="#f4d77a"/><path d="M1 2h7l1 2H1z" fill="#e0b840"/><path d="M7 14l4-4 4 4v5H7z" fill="#36a8e0"/></svg></span>
      <span class="tk run"><svg viewBox="0 0 22 22" class="ti"><circle cx="11" cy="11" r="10" fill="#66bb22"/><path d="M5 11h11M16 11a5.500 5.500 0 1 0-2 4.500" fill="none" stroke="#fff" stroke-width="2"/></svg></span>
      <span class="tk run"><svg viewBox="0 0 24 24" class="ti24"><path d="M20 3Q6 0 3 11c-1 9 8 12 14 8 5-4 4-10-2-10-3 0-5 3-3 5 3 1 4-1 4-1-1 4-6 4-8 0-1-5 3-9 12-10z" fill="#1c8ee8"/></svg></span>
      <span class="tk run cur"><svg class="ic24"><use href="#logo"/></svg></span>
    </div>
    <div class="tray">
      <span class="lnk">链接</span>
      <div class="cpu"><span>29%</span><span>CPU使用</span></div>
      <svg class="tr t-up" viewBox="0 0 16 16"><path d="M2 11l6-6 6 6" fill="none" stroke="#eee"/></svg>
      <svg class="tr" viewBox="0 0 16 16"><path d="M0 5h2V3M4 5V3M0 5v4h2M5 4h10v8H5z" fill="none" stroke="#eee"/><rect x="6" y="5" width="7" height="6" fill="#eee"/></svg>
      <svg class="tr" viewBox="0 0 16 16"><path d="M1 13A12 12 0 0 1 13 2M4 13a9 9 0 0 1 9-8M7 13a6 6 0 0 1 6-5" fill="none" stroke="#aaa"/><circle cx="13" cy="13" r="1.500" fill="#eee"/></svg>
      <svg class="tr" viewBox="0 0 16 16"><path d="M1 6h3l4-4v12l-4-4H1zM10 5q2 3 0 6M12 3q3 5 0 10" fill="none" stroke="#eee"/></svg>
      <svg class="kb" viewBox="0 0 22 12"><rect x=".5" y=".5" width="21" height="11" rx="1" fill="none" stroke="#eee"/><path d="M3 3h16M3 5.500h16M5 8.500h12" stroke="#eee" stroke-dasharray="1 1"/></svg>
      <span class="tra">A</span>
      <span class="sg sg-t">S</span>
      <div class="clock"><span>13:02</span><span>2018/3/5</span></div>
      <svg class="note" viewBox="0 0 18 16"><path d="M.5.500h17v11h-6l-2.500 3-2.500-3h-6z" fill="none" stroke="#fff"/></svg>
    </div>
  </div>

  <div class="ime">
    <span class="sg sg-b">S</span>
    <span class="ime-a">A</span><span class="ime-p">•,</span>
    <svg class="imei" viewBox="0 0 16 16"><circle cx="8" cy="8" r="7" fill="none" stroke="#1a78d8" stroke-width="1.500"/><circle cx="5.500" cy="6" r="1" fill="#1a78d8"/><circle cx="10.500" cy="6" r="1" fill="#1a78d8"/><path d="M4 10q4 3 8 0" fill="none" stroke="#1a78d8"/></svg>
    <svg class="imei" viewBox="0 0 16 16"><rect x="5" y="0" width="6" height="10" rx="3" fill="#1a78d8"/><path d="M2 7a6 6 0 0 0 12 0M8 13v2M4 15.500h8" fill="none" stroke="#1a78d8" stroke-width="1.500"/></svg>
    <svg class="imei" viewBox="0 0 16 16"><rect y="2" width="16" height="12" rx="1" fill="#1a78d8"/><path d="M2 5h12M2 8h12M4 11h8" stroke="#fff" stroke-dasharray="1 1"/></svg>
    <svg class="imei" viewBox="0 0 16 16"><circle cx="7" cy="4" r="3.500" fill="#b8cee4"/><path d="M1 13q0-5 6-5t6 5z" fill="#b8cee4"/><rect x="6" y="10" width="10" height="6" fill="#8aa8c6"/></svg>
    <svg class="imei" viewBox="0 0 16 16"><path d="M5 1l3 2 3-2 5 3-2 3-2-1v9H4V6L2 7 0 4z" fill="#1a78d8"/></svg>
    <svg class="imei" viewBox="0 0 16 16"><path d="M1 15v-3l7-6a4.500 4.500 0 0 1 6-5l-3 3 2 2 3-3a4.500 4.500 0 0 1-6 6l-6 6z" fill="#1a78d8"/></svg>
  </div>
</div>
</body>
</html>
```

FILE: styles.css
```css
* { box-sizing: border-box; }
html, body { margin: 0; padding: 0; }
body {
  width: 1366px; height: 768px; overflow: hidden; background: #efefef;
  font: 12px/16px "Noto Sans CJK SC", "Liberation Sans", sans-serif; color: #1a1a1a;
}
em { font: 10px/16px "DejaVu Sans Mono", "Liberation Mono", monospace; font-style: normal; }
.defs { position: absolute; width: 0; height: 0; }
.app { position: relative; width: 1366px; height: 768px; display: flex; flex-direction: column; overflow: hidden; }
.ic16 { width: 16px; height: 16px; flex: none; }
.ic18 { width: 18px; height: 18px; flex: none; }
.ic24 { width: 24px; height: 24px; }

.title { height: 23px; flex: none; background: #fff; display: flex; align-items: center; padding-left: 2px; position: relative; }
.title-text { margin-left: 5px; font-size: 12.650px; white-space: nowrap; color: #111; }
.badge { position: absolute; left: 1148px; top: -30px; width: 48px; height: 48px; border-radius: 50%; background: #2fb457; border: 2px solid #cfd6d0; box-shadow: 0 1px 3px #999; display: flex; align-items: flex-end; justify-content: center; }
.badge span { color: #fff; font: bold 12px/12px "Liberation Sans", sans-serif; margin-bottom: 3px; }
.winbtns { margin-left: auto; display: flex; gap: 29.500px; padding-right: 17px; }
.wb { width: 16px; height: 16px; }

.menu { height: 30px; flex: none; display: flex; gap: 3px; margin-bottom: 1px; background: #f3f3f3; }
.menu-main { width: 934px; display: flex; align-items: center; gap: 10.600px; padding-left: 7px; background: linear-gradient(#fafafa, #f2f2f2); white-space: nowrap; color: #2c2c2c; }
.menu-main .it { gap: 3px; }
.menu-main .nbx { margin-left: -4px; }
.menu-main .gx { margin-left: -2px; }
.menu-main .dd { margin: 0 -2px 0 -4px; }
.msg { width: 186px; display: flex; align-items: center; justify-content: center; color: #6b3a10; background: linear-gradient(#fdfdfd, #f2f2f2); font-size: 12px; }
.acct { flex: 1; display: flex; align-items: center; padding-left: 5px; gap: 3px; background: linear-gradient(#fdfdfd, #f2f2f2); }
.phone { font-size: 12.700px; }
.acct .dd { margin: 0 4px 0 5px; }
.bean { font-size: 12.500px; }
.bellic { margin-left: 5px; }
.more { font: bold 13px/12px "Liberation Sans", sans-serif; align-self: flex-start; margin-top: 1px; color: #111; }
.more-r { margin-left: auto; margin-right: 3px; align-self: flex-start; margin-top: 2px; }

.tb { display: flex; align-items: center; gap: 8px; background: linear-gradient(#fbfbfb, #f1f1f1); white-space: nowrap; border-radius: 2px; }
.it { display: inline-flex; align-items: center; gap: 4px; }
.it.tight { gap: 0; }
.off { color: #8f8f8f; }
.dd { flex: none; width: 0; height: 0; border: 3px solid transparent; border-top: 3.500px solid #222; border-bottom: 0; display: block; margin: 0 1px; }
.dd-n { margin-left: -3px; }
.sep { flex: none; width: 1px; height: 20px; background: #b8b8b8; margin: 0 -2px; }
.grip { flex: none; width: 3px; height: 16px; background: repeating-linear-gradient(#aaa 0 3px, transparent 3px 5px); }

.row1 { height: 26px; flex: none; display: flex; padding-left: 2px; gap: 3px; margin-bottom: 4px; }
.row1 .tb { height: 26px; }
.tb-a { width: 148px; padding: 0 3px 0 4px; gap: 6px; }
.tb-a .more { margin-left: auto; }
.tb-a .sep { margin: 0; }
.tb-b { width: 547px; padding-left: 4px; gap: 7px; }
.tb-b .more { margin-left: auto; margin-right: 6px; }
.sigma { width: 16px; font: bold 14px/16px "Liberation Sans", sans-serif; text-align: center; }
.tb-c { flex: 1; padding-left: 5px; gap: 6.500px; margin-right: 1px; }
.tb-c .more { margin-left: auto; margin-right: 2px; }
.tb-c .dd { margin: 0 1px; }
.tb-c .dd-n { margin: 0 -2px 0 -3px; }
.tb-c .sep-a { margin: 0 -1px 0 0; }
.tb-c .sep-b { margin: 0 -1px 0 -1px; }

.main { flex: none; height: 621px; display: flex; }
.nav { width: 165px; flex: none; display: flex; flex-direction: column; }
.nav-head { height: 16px; flex: none; background: #0552e0; color: #fff; display: flex; align-items: center; padding: 0 2px 0 1px; font-size: 12.500px; }
.hd-ic { width: 12px; height: 12px; margin-left: 7px; flex: none; }
.pin { margin-left: auto; }
.nav-btn { height: 22px; flex: none; margin: 0 0 0 1px; width: 164px; background: #f1f1f1; border: 1px solid #a5a5a5; display: flex; align-items: center; justify-content: center; font-size: 12.500px; border-left-color: #d8d8d8; border-top-color: #d8d8d8; }
.nb-b { margin-top: 2px; }
.nav-tools { height: 27px; flex: none; display: flex; align-items: center; gap: 8px; padding: 0 0 0 7px; background: linear-gradient(#f6f6f6, #ececec); }
.pm { width: 16px; height: 16px; flex: none; }
.tree { flex: 1; margin-left: 2px; width: 163px; border: 2px solid #9f9f9f; background: #fff; padding: 1px 0 0; overflow: hidden; }
.r { height: 16px; display: flex; align-items: center; gap: 5px; padding-left: 20px; position: relative; white-space: nowrap; }
.r::before { content: ""; position: absolute; left: 14px; width: 9px; border-top: 1px dotted #777; top: 8px; }
.r > svg { position: relative; background: #fff; margin-left: 2px; }
.r > .bk { margin-left: 0; }
.chev { position: absolute; left: 8px; top: 4px; width: 7px; height: 7px; border: solid #aaa; border-width: 2px 2px 0 0; transform: rotate(45deg); z-index: 1; background: #fff; }
.chev.open { left: 9px; top: 2px; border-color: #555; transform: rotate(135deg); }
.kids { position: relative; }
.kids::before { content: ""; position: absolute; left: 13px; top: -6px; bottom: 0; border-left: 1px dotted #777; }
.kids::after { content: ""; position: absolute; left: 32px; top: -6px; bottom: 8px; border-left: 1px dotted #777; }
.c { height: 16px; display: flex; align-items: center; gap: 5px; padding-left: 41px; position: relative; white-space: nowrap; }
.c::before { content: ""; position: absolute; left: 33px; width: 10px; border-top: 1px dotted #777; top: 8px; }
.c > svg, .hl > svg { position: relative; }
.hl { display: flex; align-items: center; gap: 5px; background: #d6d6d6; height: 16px; width: 89px; margin-right: -5px; }
.bk { margin-left: 0; }
.new { background: #ffe200; color: #222; font: bold 9px/8px "Liberation Sans", sans-serif; height: 8px; padding: 0 1px; margin: -8px 0 0 -3px; position: relative; }

.work { flex: 1; display: flex; flex-direction: column; padding-left: 6px; }
.work > .tb { flex: none; align-self: flex-start; }
.t2 { height: 26px; padding: 0 5px 0 3px; gap: 7.700px; width: 789px; margin-bottom: 2px; }
.t2 .grip { margin-right: -4px; }
.t2 .sep { margin: 0 -2px; }
.t2 .dd-n { margin: 0 -1px 0 -5px; }
.t3 { height: 25px; width: 566px; padding: 0 5px 0 3px; gap: 7.500px; margin-bottom: 4px; }
.combo { height: 22px; width: 57px; flex: none; background: #fff; display: flex; align-items: center; justify-content: space-between; padding-left: 2px; position: relative; }
.combo .dd { margin-right: 4px; position: relative; z-index: 1; }
.combo::after { content: ""; position: absolute; right: 0; top: 1px; bottom: 1px; width: 11px; background: #f1f1f1; }
.t3 .combo { margin-right: -3.500px; }
.t3 .combo:first-of-type { margin-left: -6px; }
.t3 .sep { margin: 0 -2px 0 1px; }
.c68 { width: 68px; }
.t4wrap { display: flex; height: 24px; flex: none; gap: 2px; margin-bottom: 4px; align-items: stretch; }
.t4 { height: 24px; width: 487px; padding: 0 4px 0 3px; gap: 7px; }
.t4 .grip { margin-right: -6px; }
.act { background: #d8e9f8; border: 1px solid #1a7dd8; height: 24px; padding-left: 6px; }
.sel { width: 51px; gap: 5px; }
.sel .ic16 { margin-left: -5px; }
.t4 .sel + .dd { margin: 0 1px 0 -4px; }
.t4 .sep { margin: 0 0 0 -1px; }
.t4 .dd-l { margin: 0 1px 0 0; }
.blank { width: 56px; margin-left: -5px; }
.rcx { margin-left: -3px; }
.t4b { width: 32px; padding-left: 3px; gap: 3px; }
.fade { width: 22px; height: 22px; background: linear-gradient(90deg, #f4f4f4, #fff 40%, #f1f1f1); }
.t5 { height: 24px; width: 422px; margin-left: 646px; padding: 0 6px 0 3px; gap: 7.500px; margin-bottom: 2px; }
.t5 .grip { margin-right: -4px; }
.t5 .dd { margin: 0 -0.5px 0 -2px; }
.scene { display: block; width: 1196px; height: 480px; margin-left: -1px; flex: none; shape-rendering: crispEdges; }
.axes { shape-rendering: auto; }
.dimt { font: 15px "Liberation Sans", sans-serif; fill: #bdbdbd; }

.bottom { flex: 1; display: flex; gap: 3px; padding-top: 2px; }
.bottom .tb { height: 28px; }
.b1 { width: 208px; padding-left: 3px; gap: 4px; }
.b1 .grip { margin-right: 0; }
.snap { width: 75px; padding-left: 2px; gap: 3px; }
.b2 { width: 262px; padding-left: 3px; gap: 6px; }
.b2 .grip { margin-right: -2px; }
.pair { display: flex; margin: 0 -3px 0 -2px; }
.w51 { width: 51px; padding-left: 1px; gap: 3px; }
.b3 { width: 409px; padding-left: 3px; gap: 2px; }
.b3 .sep { margin: 0 0 0 3px; }
.lab { color: #8a8a8a; font-size: 13px; }
.xlab { margin-left: 1px; margin-right: 1px; }
.ylab { margin-left: 2px; }
.spin { width: 57px; height: 22px; border: 1px solid #777; background: #fafafa; display: flex; align-items: center; justify-content: flex-end; padding-right: 17px; color: #999; font-size: 13px; position: relative; flex: none; }
.sp { position: absolute; right: 4px; top: 4px; width: 0; height: 0; border: 3px solid transparent; border-bottom: 3.500px solid #555; border-top: 0; text-decoration: none; }
.sp::after { content: ""; position: absolute; left: -3px; top: 9px; border: 3px solid transparent; border-top: 3.500px solid #555; border-bottom: 0; }
.check { width: 11px; height: 11px; border: 1px solid #999; background: #fff; flex: none; margin-right: 7px; }
.rotl { font-size: 12px; }
.rotv { width: 68px; margin-left: 2px; color: #c09a78; padding-right: 18px; }
.deg { margin-left: 2px; }

.status { height: 21px; flex: none; margin-top: 2px; display: flex; gap: 3px; padding: 0 2px; background: #efefef; }
.p { height: 20px; border: 1px solid #d8d8d8; background: #fbfbfb; display: flex; align-items: center; padding-left: 1px; white-space: nowrap; }
.p1 { width: 145px; }
.p2 { width: 77px; }
.p3 { width: 97px; }
.p4 { width: 47px; }
.p5 { flex: 1; }
.p6 { width: 67px; }

.taskbar { height: 40px; flex: none; display: flex; background: #00101a; color: #ddd; }
.start { width: 48px; background: #000; display: flex; align-items: center; justify-content: center; }
.win { width: 16px; height: 16px; }
.search { width: 344px; background: #333; display: flex; align-items: center; padding-left: 10px; color: #8796a0; position: relative; }
.cortana { width: 20px; height: 20px; border-radius: 50%; border: 3px solid #ddd; margin-right: 6px; }
.mic { width: 14px; height: 16px; margin-left: auto; margin-right: 14px; }
.apps { display: flex; }
.tk { width: 50.300px; height: 40px; display: flex; align-items: center; justify-content: center; position: relative; }
.tk-v { width: 48px; }
.tv { width: 20px; height: 14px; }
.ti { width: 22px; height: 22px; }
.ti24 { width: 24px; height: 24px; }
.tk:nth-child(2) { margin-left: 1px; }
.run::after { content: ""; position: absolute; left: 5px; right: 5px; bottom: 0; height: 2px; background: #76b9ed; }
.cur { background: #33393c; width: 48px; margin-left: -1.300px; }
.cur::after { left: 0; right: 0; }
.tray { flex: 1; display: flex; align-items: center; position: relative; padding-left: 59px; white-space: nowrap; }
.lnk { color: #a8a8a8; width: 43px; }
.cpu { display: flex; flex-direction: column; align-items: center; line-height: 18px; width: 48px; color: #ddd; }
.tr { width: 16px; height: 16px; margin-left: 8px; }
.t-up { margin-left: 18px; }
.kb { width: 22px; height: 12px; margin-left: 8px; }
.tra { color: #fff; font: bold 15px "Liberation Sans", sans-serif; margin-left: 10px; width: 12px; }
.sg { display: flex; align-items: center; justify-content: center; background: #ee4411; color: #fff; font: bold italic 15px/16px "Liberation Sans", sans-serif; border-radius: 3px; transform: rotate(-10deg); }
.sg-t { width: 15px; height: 15px; margin-left: 15px; }
.clock { display: flex; flex-direction: column; align-items: center; line-height: 18px; width: 54px; margin-left: 20px; color: #ddd; }
.note { width: 18px; height: 16px; margin-left: 22px; }

.ime { position: absolute; left: 1165px; top: 680px; width: 197px; height: 21px; background: #fff; border: 1px solid #b8d4ee; display: flex; align-items: center; gap: 6px; padding-left: 25px; }
.sg-b { position: absolute; left: -6px; top: -6px; width: 25px; height: 26px; font-size: 22px; }
.ime-a { color: #1a78d8; font: 18px/20px "Liberation Sans", sans-serif; width: 16px; }
.ime-p { color: #1a78d8; font: bold 12px/12px "Liberation Sans", sans-serif; width: 16px; }
.imei { width: 16px; height: 16px; flex: none; }
```
